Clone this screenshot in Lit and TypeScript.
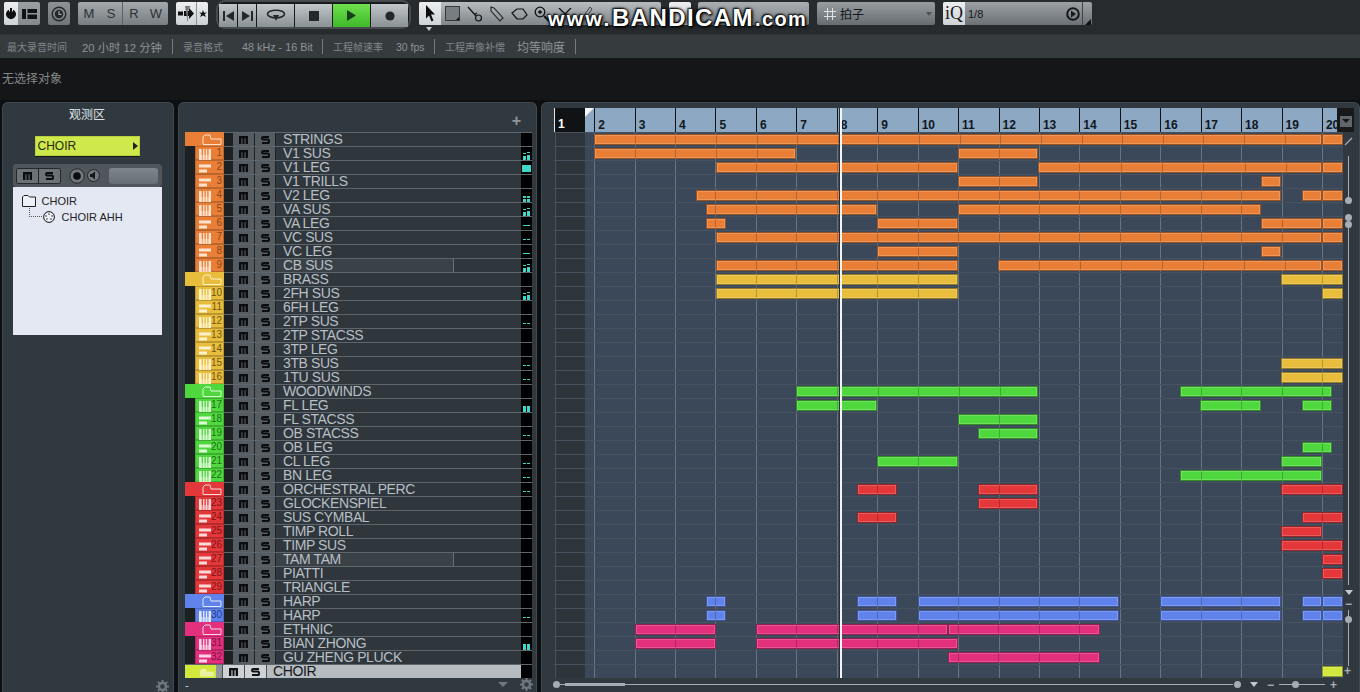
import { LitElement, html, css, svg } from "lit";
import { customElement } from "lit/decorators.js";

type Grp = { c: string; num: string; tint: string };
const G: Record<string, Grp> = {
  o: { c: "#e97f37", num: "#8a4516", tint: "#fde3cf" },
  y: { c: "#e8bd3c", num: "#6e5510", tint: "#fdf2cc" },
  g: { c: "#4fd83e", num: "#1d6f14", tint: "#dcfbd6" },
  r: { c: "#e3373a", num: "#7e1416", tint: "#fbd9d9" },
  b: { c: "#5f83ea", num: "#1f3a8c", tint: "#e2e9fd" },
  p: { c: "#e3307d", num: "#7c1140", tint: "#fbd5e5" },
  c: { c: "#d2e83c", num: "#5e6a10", tint: "#f4f9c8" },
};

type Row = { n: string; g: string; no?: number; ic?: "k" | "b"; m?: string; f?: boolean; clips: number[][] };
const h = (a: number[][]) => a;
const rows: Row[] = [
  { n: "STRINGS", g: "o", clips: h([[594, 1343]]) },
  { n: "V1 SUS", g: "o", no: 1, ic: "k", m: "a", clips: h([[594, 796], [958, 1038]]) },
  { n: "V1 LEG", g: "o", no: 2, ic: "b", m: "s", clips: h([[716, 958], [1038, 1343]]) },
  { n: "V1 TRILLS", g: "o", no: 3, ic: "b", clips: h([[958, 1038], [1261, 1281]]) },
  { n: "V2 LEG", g: "o", no: 4, ic: "k", m: "t", clips: h([[696, 1281], [1302, 1343]]) },
  { n: "VA SUS", g: "o", no: 5, ic: "k", m: "a", clips: h([[706, 877], [958, 1261]]) },
  { n: "VA LEG", g: "o", no: 6, ic: "b", m: "l", clips: h([[706, 726], [877, 958], [1261, 1343]]) },
  { n: "VC SUS", g: "o", no: 7, ic: "k", m: "d", clips: h([[716, 1343]]) },
  { n: "VC LEG", g: "o", no: 8, ic: "b", m: "l", clips: h([[877, 958], [1261, 1281]]) },
  { n: "CB SUS", g: "o", no: 9, ic: "k", m: "a", f: true, clips: h([[716, 958], [998, 1343]]) },
  { n: "BRASS", g: "y", clips: h([[716, 958], [1281, 1343]]) },
  { n: "2FH SUS", g: "y", no: 10, ic: "k", m: "a", clips: h([[716, 958], [1322, 1343]]) },
  { n: "6FH LEG", g: "y", no: 11, ic: "b", clips: [] },
  { n: "2TP SUS", g: "y", no: 12, ic: "k", m: "d", clips: [] },
  { n: "2TP STACSS", g: "y", no: 13, ic: "b", clips: [] },
  { n: "3TP LEG", g: "y", no: 14, ic: "b", clips: [] },
  { n: "3TB SUS", g: "y", no: 15, ic: "k", m: "d", clips: h([[1281, 1343]]) },
  { n: "1TU SUS", g: "y", no: 16, ic: "k", m: "d", clips: h([[1281, 1343]]) },
  { n: "WOODWINDS", g: "g", clips: h([[796, 1038], [1180, 1332]]) },
  { n: "FL LEG", g: "g", no: 17, ic: "k", m: "p", clips: h([[796, 877], [1200, 1261], [1302, 1332]]) },
  { n: "FL STACSS", g: "g", no: 18, ic: "b", clips: h([[958, 1038]]) },
  { n: "OB STACSS", g: "g", no: 19, ic: "k", m: "d", clips: h([[978, 1038]]) },
  { n: "OB LEG", g: "g", no: 20, ic: "b", clips: h([[1302, 1332]]) },
  { n: "CL LEG", g: "g", no: 21, ic: "k", m: "d", clips: h([[877, 958], [1281, 1322]]) },
  { n: "BN LEG", g: "g", no: 22, ic: "k", m: "d", clips: h([[1180, 1322]]) },
  { n: "ORCHESTRAL PERC", g: "r", m: "d", clips: h([[857, 897], [978, 1038], [1281, 1343]]) },
  { n: "GLOCKENSPIEL", g: "r", no: 23, ic: "k", clips: h([[978, 1038]]) },
  { n: "SUS CYMBAL", g: "r", no: 24, ic: "b", clips: h([[857, 897], [1302, 1343]]) },
  { n: "TIMP ROLL", g: "r", no: 25, ic: "b", clips: h([[1281, 1322]]) },
  { n: "TIMP SUS", g: "r", no: 26, ic: "b", clips: h([[1281, 1343]]) },
  { n: "TAM TAM", g: "r", no: 27, ic: "b", f: true, clips: h([[1322, 1343]]) },
  { n: "PIATTI", g: "r", no: 28, ic: "b", clips: h([[1322, 1343]]) },
  { n: "TRIANGLE", g: "r", no: 29, ic: "b", clips: [] },
  { n: "HARP", g: "b", clips: h([[706, 726], [857, 897], [918, 1119], [1160, 1281], [1302, 1343]]) },
  { n: "HARP", g: "b", no: 30, ic: "k", m: "d", clips: h([[706, 726], [857, 897], [918, 1119], [1160, 1281], [1302, 1343]]) },
  { n: "ETHNIC", g: "p", clips: h([[635, 716], [756, 948], [948, 1100]]) },
  { n: "BIAN ZHONG", g: "p", no: 31, ic: "k", m: "p", clips: h([[635, 716], [756, 958]]) },
  { n: "GU ZHENG PLUCK", g: "p", no: 32, ic: "b", clips: h([[948, 1100]]) },
  { n: "CHOIR", g: "c", clips: h([[1322, 1343]]) },
];

const X0 = 554;
const BAR2 = 594.2;
const BARW = 40.43;
const bars = Array.from({ length: 19 }, (_, i) => i + 2);
const barX = (n: number) => BAR2 + (n - 2) * BARW;

function keysIcon(col: string, slat: string) {
  return html`<svg class="ic" width="12" height="12" viewBox="0 0 12 12"><path d="M0 1h12v11H0z" fill=${col}/><path d="M2.6 1h1.4v6H2.6zM5.4 1h1.4v6H5.4zM8.2 1h1.4v6H8.2z" fill=${slat}/><path d="M3.3 7v5M6.1 7v5M8.9 7v5" stroke=${slat} stroke-width=".7"/></svg>`;
}
function barsIcon(col: string) {
  return html`<svg class="ic" width="12" height="12" viewBox="0 0 12 12"><path d="M0 2.5h12v3H0zM0 7.5h8v3H0z" fill=${col}/></svg>`;
}
function folderIcon(col: string, w = 20, fill = "none") {
  return html`<svg width=${w} height="11" viewBox="0 0 20 11"><path d="M1 10V3L3 1h5l1 4h10v5" fill=${fill} stroke=${col} stroke-width="1"/><path d="M1 10.5h18" stroke=${col}/></svg>`;
}
const T = "#3fd8c8";
function meter(m?: string) {
  if (!m) return null;
  let inner;
  if (m === "s") inner = svg`<rect x="1" y="3" width="9" height="7" fill="${T}"/>`;
  else if (m === "a") inner = svg`<path d="M2 8h3v4H2zM6 7h3v5H6zM2 5h3v1H2zM6 4h3v1H6z" fill="${T}"/>`;
  else if (m === "t") inner = svg`<path d="M2 6h3v2H2zM6 6h3v2H6zM2 9h3v3H2zM6 9h3v3H6z" fill="${T}"/>`;
  else if (m === "p") inner = svg`<path d="M2 6h3v7H2zM6 6h3v7H6z" fill="${T}"/>`;
  else if (m === "l") inner = svg`<path d="M2 7h7v1H2z" fill="${T}"/>`;
  else inner = svg`<path d="M2 7h3v1H2zM6 7h3v1H6z" fill="${T}"/>`;
  return html`<svg width="11" height="13" viewBox="0 0 11 13">${inner}</svg>`;
}
const gear = html`<svg width="13" height="13" viewBox="0 0 13 13"><circle cx="6.5" cy="6.5" r="3.5" fill="none" stroke="#6f787e" stroke-width="2.4"/><path d="M6.5 0v2.5M6.5 10.5V13M0 6.5h2.5M10.5 6.5H13M1.9 1.9l1.8 1.8M9.3 9.3l1.8 1.8M1.9 11.1l1.8-1.8M9.3 3.7l1.8-1.8" stroke="#6f787e" stroke-width="2"/></svg>`;
const mGlyph = (col: string) => html`<svg width="9" height="8" viewBox="0 0 9 8"><path d="M0 0h9v8H6.6V2.2H5.5V8H3.5V2.2H2.4V8H0z" fill=${col}/></svg>`;
const sGlyph = (col: string) => html`<svg width="9" height="8" viewBox="0 0 9 8"><path d="M8 1H2.2Q1 1 1 2.2T2.2 3.4h4.6Q8 3.4 8 5.4T6.8 7H1" fill="none" stroke=${col} stroke-width="2"/></svg>`;

@customElement("app-root")
export class AppRoot extends LitElement {
  static styles = css`
    :host { display: block; width: 1360px; height: 692px; overflow: hidden; background: #111213; font-family: "Liberation Sans", "Noto Sans CJK SC", sans-serif; position: relative; }
    .toolbar { height: 34px; box-sizing: border-box; background: #272b2e; display: flex; align-items: flex-start; padding: 2px 0 0 4px; }
    .b { height: 23px; border-radius: 2px; background: linear-gradient(#b4babe, #858b8f); display: flex; align-items: center; flex: none; overflow: hidden; box-sizing: border-box; }
    .seg { height: 100%; display: flex; align-items: center; justify-content: center; box-sizing: border-box; flex: none; }
    .light { background: linear-gradient(#eceef0, #cfd3d6); }
    .a { width: 36px; background: linear-gradient(#9aa0a3, #83898d); }
    .a .l { width: 14px; }
    .a .r { width: 22px; }
    .clock { width: 22px; margin-left: 8px; background: linear-gradient(#8d9397, #6f7579); justify-content: center; }
    .msrw { width: 90px; margin-left: 8px; background: linear-gradient(#a3a9ac, #777d81); font-size: 13px; color: #2d3133; }
    .msrw .ms { width: 44px; } .msrw .rw { width: 45px; border-left: 1px solid #5c6266; }
    .msrw span { flex: 1; text-align: center; }
    .auto { width: 32px; margin-left: 8px; background: linear-gradient(#eef0f1, #cdd1d4); }
    .auto .l { width: 21px; border-right: 1px solid #8a9094; } .auto .r { width: 11px; }
    .transport { margin: -2px 0 0 8px; width: 195px; height: 29px; box-sizing: border-box; border: 2px solid #454b4f; border-radius: 9px; background: #17191b; padding: 2px 1px; display: flex; gap: 1px; flex: none; }
    .tb { height: 23px; display: flex; align-items: center; justify-content: center; background: linear-gradient(#c0c6ca, #8a9195); flex: none; }
    .w18 { width: 18px; } .w37 { width: 37px; }
    .play { background: linear-gradient(#6fe04e, #3fb92a); }
    .tools { width: 242px; margin-left: 8px; background: linear-gradient(#b6bcc0, #7f8589); }
    .tools .first { width: 22px; background: linear-gradient(#eceef0, #cfd3d6); }
    .tools .t { width: 22.5px; }
    .sm { width: 22px; margin-left: 8px; }
    .mid { width: 111px; margin-left: 7px; background: linear-gradient(#a9aeb2, #7d8387); }
    .drop { width: 118px; margin-left: 8px; background: linear-gradient(#979da1, #666c70); font-size: 12px; color: #141618; padding-left: 7px; gap: 4px; position: relative; }
    .arrow { position: absolute; right: 3px; top: 10px; width: 0; height: 0; border: 3px solid transparent; border-top: 4px solid #4d5357; }
    .iq { width: 149px; margin-left: 8px; background: linear-gradient(#9ba1a5, #6b7175); position: relative; }
    .iq .q { width: 22px; font: 18px "Liberation Serif", serif; color: #15171a; background: linear-gradient(#eceef0, #cfd3d6); }
    .iq .v { font-size: 11px; color: #15171a; margin-left: 3px; width: 98px; }
    .iq .tail { width: 10px; border-left: 1px solid #3d4347; margin-left: auto; align-items: flex-end; }
    .wm { position: absolute; left: 548px; top: 5px; height: 26px; display: flex; align-items: baseline; color: #fff; font-weight: 700; text-shadow: 0 0 2px #000, 1px 1px 2px #000, -1px -1px 2px #000, 1px 1px 4px #000; white-space: nowrap; line-height: 26px; }
    .wm .w1 { font-size: 21px; letter-spacing: 2.4px; width: 64px; }
    .wm .w2 { font-size: 24px; letter-spacing: 1.4px; width: 143px; }
    .wm .w3 { font-size: 20px; letter-spacing: 1.4px; }
    .caret { position: absolute; left: 426px; top: 27px; width: 0; height: 0; border: 3px solid transparent; border-top: 4px solid #c9ced1; }
    .info { height: 24px; background: #363b3e; border-top: 1px solid #2f3437; box-sizing: border-box; display: flex; align-items: center; color: #7f878c; font-size: 10px; white-space: nowrap; padding-left: 7px; }
    .info .big { font-size: 12px; color: #8d9499; margin-left: 12px; }
    .info .rec { font-size: 11.3px; color: #8d9499; margin-left: 15px; width: 80px; }
    .info .fmt { font-size: 10.8px; color: #8d9499; margin-left: 19px; width: 71px; }
    .info .fps { font-size: 10.5px; color: #8d9499; margin-left: 13px; width: 30px; }
    .info .lb { margin-left: 10px; }
    .info i { width: 1px; height: 15px; background: #757b80; flex: none; }
    .info .d1 { margin-left: 10px; } .info .d2 { margin-left: 9px; } .info .d3 { margin-left: 8px; }
    .sel { height: 42px; background: #151617; color: #85888a; font-size: 12px; display: flex; align-items: center; padding-left: 2px; box-sizing: border-box; padding-bottom: 4px; }
    .main { height: 592px; background: #0e0f10; display: flex; padding: 2px 0 0 2px; box-sizing: border-box; }
    .panel { background: #30393f; border: 1px solid #414a51; border-bottom: 0; border-radius: 6px 6px 0 0; box-sizing: border-box; position: relative; flex: none; height: 590px; }
    .insp { width: 172px; display: flex; flex-direction: column; align-items: center; padding-right: 2px; }
    .title { color: #dfe3e6; font-size: 12px; line-height: 14px; margin-top: 5px; }
    .tsel { width: 105px; height: 20px; margin-top: 14px; background: #cfe84c; color: #262c10; font-size: 12px; display: flex; align-items: center; padding-left: 2px; box-sizing: border-box; position: relative; border: 1px solid #b9cf3c; box-shadow: 0 1px 0 #15181a; flex: none; }
    .tri { position: absolute; right: 1px; top: 5px; width: 0; height: 0; border: 4px solid transparent; border-left: 5px solid #222; border-right: 0; }
    .strip { margin-top: 8px; width: 149px; height: 23px; box-sizing: border-box; background: #4f575d; border-radius: 4px; display: flex; align-items: center; padding-left: 3px; flex: none; }
    .ms2 { width: 45px; height: 16px; background: #6b7278; border: 1px solid #25292c; border-radius: 2px; display: flex; box-sizing: border-box; flex: none; }
    .ms2 div { flex: 1; display: flex; align-items: center; justify-content: center; }
    .ms2 div + div { border-left: 1px solid #25292c; }
    .fader { width: 49px; height: 16px; margin-left: 9px; background: linear-gradient(#7e858b, #666d73); border-radius: 3px; flex: none; }
    .circ1 { margin-left: 8px; } .circ2 { margin-left: 2px; }
    .tree { width: 149px; height: 148px; background: #e4e8f2; color: #1f2326; font-size: 11px; flex: none; box-sizing: border-box; padding: 6px 0 0 9px; position: relative; }
    .tl { display: flex; align-items: center; gap: 6px; height: 16px; }
    .tl.sub { padding-left: 21px; gap: 7px; }
    .dots { position: absolute; left: 16px; top: 21px; width: 14px; height: 8px; border-left: 1px dotted #555; border-bottom: 1px dotted #555; }
    .gear1 { position: absolute; right: 4px; bottom: 0; height: 13px; }
    .tracks { width: 359px; margin-left: 4px; display: flex; flex-direction: column; padding-left: 6px; }
    .thead { height: 29px; display: flex; justify-content: flex-end; align-items: flex-end; padding-right: 15px; box-sizing: border-box; flex: none; color: #8d959b; font-size: 16px; font-weight: 700; line-height: 22px; }
    .tr { height: 14px; width: 347px; box-sizing: border-box; border-top: 1px solid #5d666c; display: flex; flex: none; background: #2f373d; }
    .ind { width: 10px; background: #1d2124; flex: none; margin-top: -1px; }
    .col { width: 29px; flex: none; display: flex; align-items: center; position: relative; margin-top: -1px; border: 1px solid #0000; box-sizing: border-box; height: 14px; }
    .col .ic { margin-left: 3px; flex: none; margin-top: 1px; }
    .no { position: absolute; right: 1px; top: 0; font-size: 10px; line-height: 12px; }
    .fold { width: 39px; flex: none; display: flex; align-items: center; justify-content: flex-end; padding-right: 2px; box-sizing: border-box; }
    .gap { width: 8px; background: #1d2124; flex: none; }
    .mb { width: 22px; background: #555d63; border-left: 1px solid #1d2124; box-sizing: border-box; display: flex; align-items: center; justify-content: center; flex: none; }
    .sb { width: 21px; background: #555d63; border-left: 1px solid #1d2124; box-sizing: border-box; display: flex; align-items: center; justify-content: center; flex: none; }
    .nm { width: 246px; flex: none; color: #b8bfc5; font-size: 14px; letter-spacing: -.4px; line-height: 13px; padding-left: 7px; white-space: nowrap; box-sizing: border-box; position: relative; border-left: 1px solid #1d2124; }
    .lvl { position: absolute; left: 0; top: 0; bottom: 0; width: 177px; background: #3a4248; border-right: 1px solid #6a7278; z-index: 0; }
    .nm span { position: relative; }
    .mt { width: 11px; background: #000; flex: none; }
    .tr.cur { border-top-color: #5d666c; background: #b7bcc1; }
    .cur .fold { width: 31px; justify-content: flex-end; align-items: flex-end; }
    .cur .pad { width: 6px; background: #8f969b; flex: none; }
    .cur .mb2 { width: 22px; background: #ced2d5; border-left: 1px solid #4b5054; box-sizing: border-box; display: flex; align-items: center; justify-content: center; flex: none; }
    .cur .nm2 { flex: 1; color: #14171a; font-size: 14px; letter-spacing: -.4px; line-height: 13px; padding-left: 6px; border-left: 1px solid #4b5054; }
    .tfoot { height: 13px; position: relative; color: #cfd3d6; font-size: 11px; padding-left: 0; line-height: 12px; width: 352px; flex: none; display: flex; align-items: center; justify-content: flex-end; gap: 12px; padding-right: 4px; box-sizing: border-box; }
    .minus { margin-right: auto; }
    .tridn { width: 0; height: 0; border: 5px solid transparent; border-top: 5px solid #6f787e; border-bottom: 0; }
    .arr { width: 819px; margin-left: 4px; padding: 5px 0 0 12px; display: flex; flex-direction: column; }
    .ruler { display: flex; height: 24px; flex: none; position: relative; }
    .r1 { width: 31px; background: #101214; border-left: 1px solid #e4e7ea; color: #fff; font: 700 12px/32px "Liberation Sans", sans-serif; padding-left: 3px; box-sizing: border-box; flex: none; }
    .rb { width: 752px; background: #8ca8c3; position: relative; flex: none; overflow: hidden; }
    .corner { position: absolute; left: 0; top: 0; width: 0; height: 0; border-top: 9px solid #f4f6f8; border-right: 9px solid transparent; }
    .tick { position: absolute; top: 0; bottom: 0; width: 1px; background: #101214; color: #10171e; }
    .tick b { position: absolute; left: 4px; top: 10px; font: 700 12px/14px "Liberation Sans", sans-serif; }
    .rend { width: 17px; background: #17191b; flex: none; display: flex; align-items: center; justify-content: center; padding-top: 2px; box-sizing: border-box; }
    .rend div { width: 12px; height: 11px; background: #5f666c; display: flex; align-items: center; justify-content: center; }
    .rend i { width: 0; height: 0; border: 4px solid transparent; border-top: 4px solid #15181a; border-bottom: 0; }
    .body { display: flex; flex: none; height: 546px; }
    .canvas { width: 789px; height: 546px; position: relative; background: linear-gradient(90deg, #2d353b 0 31px, #3a4859 31px); flex: none; overflow: hidden; }
    .line { position: absolute; top: 0; bottom: 0; width: 1px; background: #687683; }
    .line.first { background: #4a555e; }
    .cr { height: 14px; border-top: 1px solid #47525e; box-sizing: border-box; position: relative; }
    .clip { position: absolute; top: 1px; height: 11px; box-sizing: border-box; border: 1px solid; box-shadow: inset 0 0 0 1px #ffffff30; }
    .vs { width: 14px; position: relative; flex: none; }
    .vl { position: absolute; left: 5px; width: 1px; background: #a6adb3; }
    .dot { position: absolute; width: 7px; height: 7px; border-radius: 50%; background: #a6adb3; }
    .sym { position: absolute; color: #a6adb3; font-size: 12px; line-height: 12px; font-weight: 700; }
    .hs { height: 14px; position: relative; flex: none; }
    .hl { position: absolute; top: 6px; height: 1px; background: #a6adb3; }
    .thumb { position: absolute; left: 11px; top: 5px; width: 60px; height: 3px; background: #a6adb3; }
    .phead { position: absolute; left: 298px; top: 5px; height: 570px; width: 2px; background: #f2f4f6; box-shadow: -1px 0 0 #2a3038; }
  `;

  clip(x1: number, x2: number, g: string) {
    const c = G[g].c;
    const A = (((BAR2 - x1 - 1) % BARW) + BARW) % BARW;
    const line = "#00000038";
    const grad = `repeating-linear-gradient(90deg,transparent 0 ${A}px,${line} ${A}px ${A + 1}px,transparent ${A + 1}px ${BARW}px)`;
    const style = `left:${x1 - X0}px;width:${x2 - x1}px;background-color:${c};border-color:color-mix(in srgb,${c} 65%,#000);background-image:${grad}`;
    return html`<div class="clip" style=${style}></div>`;
  }

  row(r: Row) {
    const g = G[r.g];
    if (r.g === "c") {
      return html`<div class="tr cur">
        <div class="fold" style="background:${g.c}">${folderIcon("#f4f9c8", 14, "#e7f1a0")}</div>
        <div class="pad"></div>
        <div class="mb2">${mGlyph("#111")}</div>
        <div class="mb2">${sGlyph("#111")}</div>
        <div class="nm2">${r.n}</div>
        <div class="mt"></div>
      </div>`;
    }
    const head = r.no
      ? html`<div class="ind"></div><div class="col" style="background:${g.c};border-color:color-mix(in srgb,${g.c} 80%,#000)">${r.ic === "k" ? keysIcon(g.tint, g.c) : barsIcon(g.tint)}<span class="no" style="color:${g.num}">${r.no}</span></div>`
      : html`<div class="fold" style="background:${g.c};margin-top:-1px">${folderIcon(g.tint)}</div>`;
    return html`<div class="tr">
      ${head}
      <div class="gap"></div>
      <div class="mb">${mGlyph("#0c0d0e")}</div>
      <div class="sb">${sGlyph("#0c0d0e")}</div>
      <div class="nm">${r.f ? html`<div class="lvl"></div>` : null}<span>${r.n}</span></div>
      <div class="mt">${meter(r.m)}</div>
    </div>`;
  }

  render() {
    return html`
      <div class="toolbar">
        <div class="b a">
          <div class="seg l light"><svg width="12" height="13" viewBox="0 0 12 13"><path d="M3.6 2.8A5 5 0 1 0 8.4 2.8L7 5.5V1H5v4.5z" fill="#0d0e0f"/></svg></div>
          <div class="seg r"><svg width="15" height="10" viewBox="0 0 15 10"><path d="M0 0h4v10H0zM5.5 0H15v4H5.5zM5.5 5.5H15V10H5.5z" fill="#101214"/></svg></div>
        </div>
        <div class="b clock"><svg width="16" height="16" viewBox="0 0 16 16"><circle cx="8" cy="8" r="6.8" fill="none" stroke="#24282a" stroke-width="1.4"/><circle cx="8" cy="8" r="4.2" fill="#24282a"/><path d="M8 5v3.4h2.6" fill="none" stroke="#9aa0a3" stroke-width="1.2"/></svg></div>
        <div class="b msrw">
          <div class="seg ms"><span>M</span><span>S</span></div>
          <div class="seg rw"><span>R</span><span>W</span></div>
        </div>
        <div class="b auto">
          <div class="seg l"><svg width="17" height="15" viewBox="0 0 17 15"><path d="M0 5.5h5v4H0zM6 5h5V2l5 5.5-5 5.5v-3H6z" fill="#111"/><path d="M7 0h5L9.5 5v10" fill="#777" stroke="#777" stroke-width=".8"/></svg></div>
          <div class="seg r"><svg width="8" height="8" viewBox="0 0 8 8"><path d="M4 0l1 2.8L8 2.5 5.7 4.3 7 7 4 5.4 1 7l1.3-2.7L0 2.5l3 .3z" fill="#111"/></svg></div>
        </div>
        <div class="transport">
          <div class="tb w18"><svg width="11" height="10" viewBox="0 0 11 10"><path d="M0 0h2v10H0zM11 0v10L3 5z" fill="#24282a"/></svg></div>
          <div class="tb w18"><svg width="11" height="10" viewBox="0 0 11 10"><path d="M9 0h2v10H9zM0 0v10l8-5z" fill="#24282a"/></svg></div>
          <div class="tb w37"><svg width="20" height="13" viewBox="0 0 20 13"><ellipse cx="10" cy="5" rx="8.5" ry="3.8" fill="none" stroke="#24282a" stroke-width="1.6"/><path d="M7 6h6l-3 6z" fill="#24282a"/></svg></div>
          <div class="tb w37"><svg width="10" height="10"><rect width="10" height="10" fill="#24282a"/></svg></div>
          <div class="tb w37 play"><svg width="9" height="11" viewBox="0 0 9 11"><path d="M0 0l9 5.5L0 11z" fill="#16401a"/></svg></div>
          <div class="tb w37"><svg width="10" height="10"><circle cx="5" cy="5" r="4.6" fill="#24282a"/></svg></div>
        </div>
        <div class="b tools">
          <div class="seg first"><svg width="11" height="17" viewBox="0 0 11 17"><path d="M1 0l9 9.5H6l2.5 6-2 1L4 10.5 1 13.5z" fill="#0c0d0e"/></svg></div>
          <div class="seg t"><svg width="15" height="15" viewBox="0 0 15 15"><rect x=".5" y=".5" width="14" height="14" fill="#777d81" stroke="#34383b"/><path d="M11 14l3-3v3z" fill="#111"/></svg></div>
          <div class="seg t"><svg width="16" height="16" viewBox="0 0 16 16" fill="none" stroke="#111" stroke-width="1.2"><path d="M1 1l8 9M8 8l2-1"/><circle cx="11.5" cy="12" r="3"/></svg></div>
          <div class="seg t"><svg width="14" height="16" viewBox="0 0 14 16" fill="none" stroke="#222" stroke-width="1.1"><path d="M1 1l3 1 9 10-3 3L1 5z"/></svg></div>
          <div class="seg t"><svg width="17" height="12" viewBox="0 0 17 12" fill="none" stroke="#111" stroke-width="1.2"><path d="M1 5l5-4h6l4 6-4 4H6z"/></svg></div>
          <div class="seg t"><svg width="16" height="16" viewBox="0 0 16 16" fill="none" stroke="#111" stroke-width="1.3"><circle cx="6" cy="6" r="4.8"/><path d="M4 6h4M6 4v4"/><path d="M10 10l5 5" stroke-width="2"/></svg></div>
          <div class="seg t"><svg width="14" height="12" viewBox="0 0 14 12" fill="none" stroke="#111" stroke-width="1.3"><path d="M1 0l12 12M13 0L1 12"/></svg></div>
          <div class="seg t"><svg width="12" height="16" viewBox="0 0 12 16" fill="none" stroke="#444"><path d="M9 1l2 2-7 10-3 2 1-4z"/></svg></div>
        </div>
        <div class="b sm light"></div>
        <div class="b mid"></div>
        <div class="b drop"><svg width="12" height="12" viewBox="0 0 12 12" stroke="#dfe3e5"><path d="M3.5 0v12M8.5 0v12M0 3.5h12M0 8.5h12"/></svg><span>拍子</span><div class="arrow"></div></div>
        <div class="b iq">
          <div class="seg q">iQ</div>
          <div class="v">1/8</div>
          <svg width="14" height="14" viewBox="0 0 14 14"><circle cx="7" cy="7" r="5.8" fill="none" stroke="#15171a" stroke-width="2"/><path d="M5 3.5l5 3.5-5 3.5z" fill="#15171a"/></svg>
          <div class="seg tail"><svg width="6" height="6" viewBox="0 0 6 6"><path d="M6 0v6H0z" fill="#111"/></svg></div>
        </div>
      </div>
      <div class="caret"></div>
      <div class="wm"><span class="w1">www.</span><span class="w2">BANDICAM</span><span class="w3">.com</span></div>
      <div class="info">
        <span>最大录音时间</span>
        <span class="rec">20 小时 12 分钟</span>
        <i class="d1"></i>
        <span class="lb">录音格式</span>
        <span class="fmt">48 kHz - 16 Bit</span>
        <i class="d2"></i>
        <span class="lb">工程帧速率</span>
        <span class="fps">30 fps</span>
        <i class="d3"></i>
        <span class="lb">工程声像补偿</span>
        <span class="big">均等响度</span>
        <i class="d1"></i>
      </div>
      <div class="sel">无选择对象</div>
      <div class="main">
        <div class="panel insp">
          <div class="title">观测区</div>
          <div class="tsel">CHOIR<div class="tri"></div></div>
          <div class="strip">
            <div class="ms2"><div>${mGlyph("#0c0d0e")}</div><div>${sGlyph("#0c0d0e")}</div></div>
            <svg class="circ1" width="16" height="16" viewBox="0 0 16 16"><circle cx="8" cy="8" r="7.2" fill="#70777d" stroke="#25292c"/><circle cx="8" cy="8" r="3.8" fill="#0c0d0e"/></svg>
            <svg class="circ2" width="13" height="13" viewBox="0 0 13 13"><circle cx="6.5" cy="6.5" r="6" fill="#70777d" stroke="#25292c"/><path d="M3 5h2l3-2.5v8L5 8H3z" fill="#15171a"/></svg>
            <div class="fader"></div>
          </div>
          <div class="tree">
            <div class="tl"><svg width="14" height="12" viewBox="0 0 14 12"><path d="M.5 11.5V2L2 .5h4L7.5 2h6v9.5z" fill="#eef1f7" stroke="#222"/></svg>CHOIR</div>
            <div class="dots"></div>
            <div class="tl sub"><svg width="12" height="12" viewBox="0 0 12 12"><circle cx="6" cy="6" r="5.4" fill="#eef1f7" stroke="#111"/><path d="M3 5h.01M6 3h.01M9 5h.01M4 8h.01M8 8h.01" stroke="#111" stroke-width="1.4" stroke-linecap="round"/></svg>CHOIR AHH</div>
          </div>
          <div class="gear1">${gear}</div>
        </div>
        <div class="panel tracks">
          <div class="thead">+</div>
          ${rows.map((r) => this.row(r))}
          <div class="tfoot"><span class="minus">-</span><div class="tridn"></div>${gear}</div>
        </div>
        <div class="panel arr">
          <div class="ruler">
            <div class="r1">1</div>
            <div class="rb">
              <div class="corner"></div>
              ${bars.map((n) => html`<div class="tick" style="left:${barX(n) - 585}px"><b>${n}</b></div>`)}
            </div>
            <div class="rend"><div><i></i></div></div>
          </div>
          <div class="body">
            <div class="canvas">
              <div class="line first" style="left:1px"></div>
              ${bars.map((n) => html`<div class="line" style="left:${barX(n) - X0}px"></div>`)}
              ${rows.map(
                (r) => html`<div class="cr">${r.clips.flatMap(([a, b]) =>
                  a < 1322 && b === 1343 && (r.g === "o" || r.g === "b")
                    ? [this.clip(a, 1322, r.g), this.clip(1322, 1343, r.g)]
                    : [this.clip(a, b, r.g)]
                )}</div>`
              )}
            </div>
            <div class="vs">
              <svg style="position:absolute;left:1px;top:4px" width="10" height="10" viewBox="0 0 10 10"><path d="M1 9l7-7" stroke="#a6adb3" stroke-width="1.2"/></svg>
              <div class="vl" style="top:24px;height:44px"></div>
              <div class="dot" style="left:2px;top:65px"></div>
              <div class="dot" style="left:2px;top:82px"></div>
              <div class="vl" style="top:90px;height:363px"></div>
              <div class="dot" style="left:2px;top:89px"></div>
              <div class="tridn" style="position:absolute;left:2px;top:458px;border-top-color:#c3c8cc;border-width:5px 4px 0"></div>
              <div class="sym" style="left:2px;top:466px">−</div>
              <div class="vl" style="top:478px;height:56px"></div>
              <div class="dot" style="left:2px;top:484px"></div>
              <div class="sym" style="left:1px;top:533px">+</div>
            </div>
          </div>
          <div class="hs">
            <div class="dot" style="left:-1px;top:3px"></div>
            <div class="hl" style="left:6px;width:673px"></div>
            <div class="thumb"></div>
            <div class="dot" style="left:680px;top:3px"></div>
            <div class="tridn" style="position:absolute;left:696px;top:4px;border-top-color:#c3c8cc;border-width:5px 4px 0"></div>
            <div class="sym" style="left:713px;top:1px">−</div>
            <div class="hl" style="left:725px;width:46px"></div>
            <div class="dot" style="left:738px;top:3px"></div>
            <div class="sym" style="left:776px;top:1px">+</div>
          </div>
          <div class="phead"></div>
        </div>
      </div>
    `;
  }
}
